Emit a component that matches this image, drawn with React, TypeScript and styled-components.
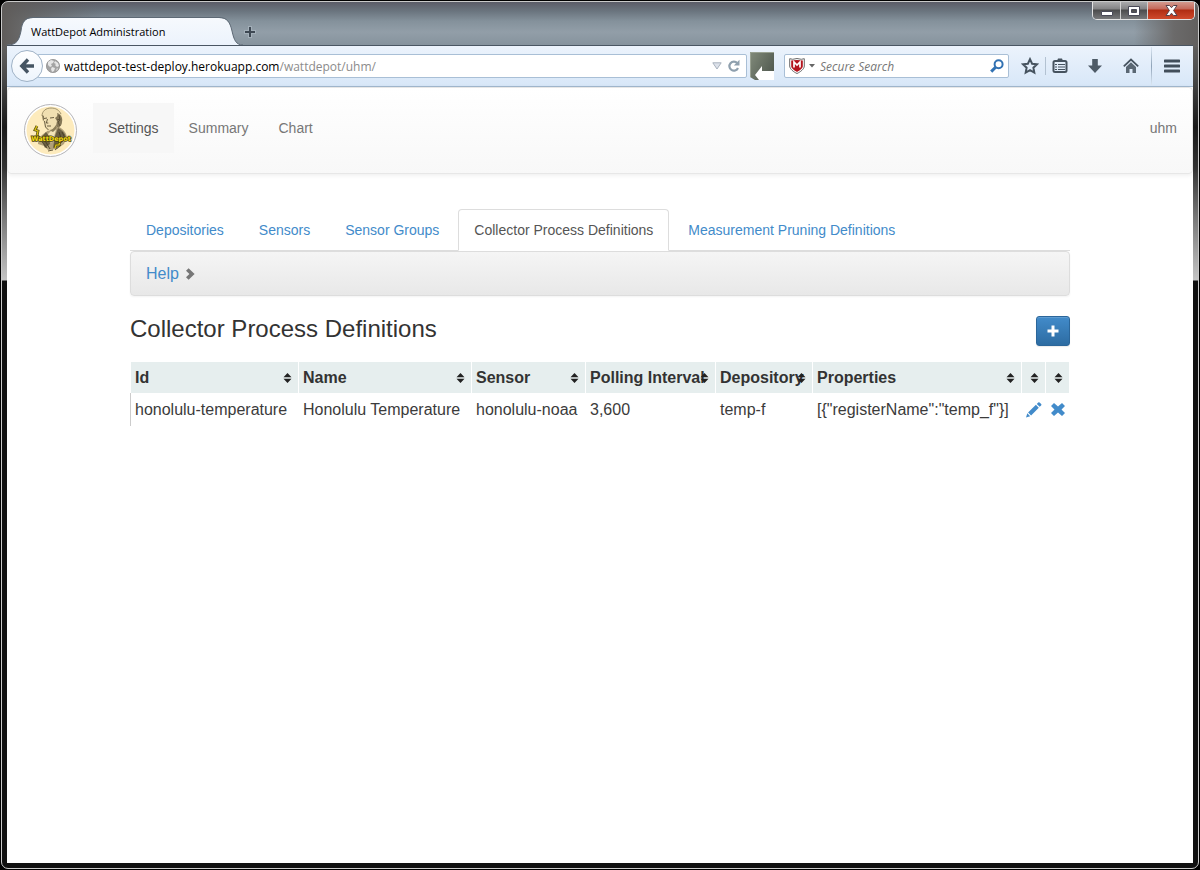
import React from "react";
import styled, { createGlobalStyle, css } from "styled-components";

const GlobalStyle = createGlobalStyle`
  *, *::before, *::after { box-sizing: border-box; }
  body {
    margin: 0;
    background: #000;
    color: #333;
    font: 14px/20px "Liberation Sans", Arial, sans-serif;
  }
  a { text-decoration: none; }
  button { font: inherit; color: inherit; margin: 0; padding: 0; border: 0; background: none; cursor: pointer; }
`;

/* ---------- window frame ---------- */

const Desktop = styled.div`
  display: flex;
  min-height: 100vh;
  padding: 1px;
  background: #000;
`;

const WindowFrame = styled.div`
  display: flex;
  flex: 1;
  flex-direction: column;
  min-width: 0;
  padding: 0 5px 5px;
  border: 1px solid #c9c9c9;
  border-radius: 7px;
  background:
    linear-gradient(90deg, #5f5c5a 0, rgba(95, 92, 90, 0.7) 30px, rgba(95, 92, 90, 0) 100px) 0 0 / 100% 45px no-repeat,
    linear-gradient(270deg, #62605f 0, #6b6a6a 24px, rgba(107, 106, 106, 0) 64px) 0 0 / 100% 45px no-repeat,
    linear-gradient(#5b5c67 0, #6a747e 9px, #84919b 19px, #929ea8 30px, #86939d 43px) 0 0 / 100% 45px no-repeat,
    linear-gradient(#5f5e5d 0, #4a4a4a 30px, #1a1a1a 80px, #333 120px, #777 170px, #c4c4c4 233px, #101010 234px, #101010 100%) 0 45px / 100% 100% no-repeat;
`;

const TitleBar = styled.header`
  display: flex;
  align-items: flex-end;
  height: 43px;
`;

const BrowserTab = styled.div`
  position: relative;
  width: 236px;
  height: 28px;
  padding: 5px 24px 0;
  color: #000;
  font: 11px/20px "Open Sans", sans-serif;
`;

const TabShape = styled.svg`
  position: absolute;
  inset: 0;
  z-index: 0;
`;

const TabTitle = styled.span`
  position: relative;
  white-space: nowrap;
`;

const NewTab = styled.button`
  display: flex;
  padding: 8px 0 7px 1px;
`;

const WindowControls = styled.div`
  display: flex;
  align-self: flex-start;
  margin-left: auto;
  margin-right: -2px;
  border: 1px solid #e3e3e3;
  border-top: 0;
  border-radius: 0 0 5px 5px;
  overflow: hidden;
`;

const ControlButton = styled.button<{ $wide?: boolean; $danger?: boolean }>`
  display: flex;
  align-items: center;
  justify-content: center;
  width: ${(p) => (p.$wide ? 47 : 27)}px;
  height: 17px;
  background: ${(p) =>
    p.$danger
      ? "linear-gradient(#d39a8e 0, #c4685a 7px, #b02c12 8px, #cf4a2c 17px)"
      : "linear-gradient(#a9a9ab 0, #838385 7px, #4b4b4c 8px, #77787a 17px)"};
  & + & { border-left: 1px solid #d0d0d0; }
`;

/* ---------- browser toolbar ---------- */

const Toolbar = styled.div`
  display: flex;
  align-items: center;
  height: 42px;
  padding: 0 13px 1px 4px;
  border-top: 1px solid #4a5663;
  border-bottom: 1px solid #a3b9d0;
  background: linear-gradient(#ecf3fc, #d8e7f8);
`;

const BackButton = styled.button`
  position: relative;
  display: flex;
  align-items: center;
  justify-content: center;
  flex: none;
  width: 32px;
  height: 32px;
  border: 1px solid #9fb2c6;
  border-radius: 50%;
  background: linear-gradient(#fff, #edf4fc);
`;

const fieldBox = css`
  display: flex;
  align-items: center;
  height: 24px;
  border: 1px solid #a9bfd6;
  border-radius: 2px;
  background: #fff;
`;

const AddressBar = styled.div`
  ${fieldBox}
  flex: 1;
  gap: 4px;
  min-width: 0;
  margin-left: -6px;
  padding: 0 4px 0 8px;
`;

const Address = styled.div`
  flex: 1;
  padding-top: 2px;
  overflow: hidden;
  color: #8b8b8b;
  font: 12px/20px "Open Sans", sans-serif;
  white-space: nowrap;
  b { color: #000; font-weight: 400; }
`;

const AddOnButton = styled.button`
  display: flex;
  margin: 0 10px 0 3px;
`;

const SearchBox = styled.form`
  ${fieldBox}
  flex: none;
  width: 225px;
  padding: 0 4px;
`;

const SearchInput = styled.input`
  flex: 1;
  min-width: 0;
  margin-left: 1px;
  padding: 2px 0 0;
  border: 0;
  outline: 0;
  background: none;
  font: italic 12px/20px "Open Sans", sans-serif;
  &::placeholder { color: #777; opacity: 1; }
`;

const ToolButtons = styled.div`
  display: flex;
  align-items: center;
  flex: none;
  margin-left: 12px;
`;

const ToolButton = styled.button<{ $gap: number }>`
  display: flex;
  margin-right: ${(p) => p.$gap}px;
`;

const ToolDivider = styled.span<{ $tall?: boolean; $gap: number }>`
  width: 1px;
  height: ${(p) => (p.$tall ? 38 : 18)}px;
  margin-right: ${(p) => p.$gap}px;
  background: ${(p) => (p.$tall ? "linear-gradient(#dbe6f2, #8fa3b8, #dbe6f2)" : "#b3c2d2")};
`;

/* ---------- page ---------- */

const Page = styled.div`
  flex: 1;
  background: #fff;
`;

const Navbar = styled.nav`
  display: flex;
  align-items: flex-start;
  height: 87px;
  padding: 15px 0 0 16px;
  border: 1px solid #e7e7e7;
  border-radius: 4px;
  background: linear-gradient(#fff, #f8f8f8);
  box-shadow: 0 1px 5px rgba(0, 0, 0, 0.08);
`;

const Brand = styled.a`
  display: flex;
  padding-top: 1px;
  margin-right: 16px;
`;

const NavLink = styled.a<{ $active?: boolean }>`
  padding: 15px;
  color: ${(p) => (p.$active ? "#555" : "#777")};
  background: ${(p) => (p.$active ? "#f7f7f7" : "none")};
`;

const UserLink = styled(NavLink)`
  margin-left: auto;
`;

const Container = styled.main`
  max-width: 970px;
  margin: 0 auto;
  padding: 35px 15px;
`;

const Tabs = styled.div`
  display: flex;
  gap: 3px;
  border-bottom: 1px solid #ddd;
`;

const TabLink = styled.a<{ $active?: boolean }>`
  margin-bottom: -1px;
  padding: 10px 15px;
  border: 1px solid transparent;
  border-radius: 4px 4px 0 0;
  color: #428bca;
  white-space: nowrap;
  ${(p) =>
    p.$active &&
    css`
      color: #555;
      background: #fff;
      border-color: #ddd #ddd #fff;
    `}
`;

const HelpPanel = styled.div`
  height: 45px;
  padding: 10px 15px;
  border: 1px solid #ddd;
  border-radius: 4px;
  background: linear-gradient(#f5f5f5, #e8e8e8);
  box-shadow: 0 1px 2px rgba(0, 0, 0, 0.05);
`;

const HelpLink = styled.a`
  display: inline-flex;
  align-items: center;
  gap: 6px;
  color: #428bca;
  font-size: 16px;
  line-height: 24px;
`;

const HeadingRow = styled.div`
  display: flex;
  align-items: center;
  justify-content: space-between;
  margin: 20px 0 16px;
`;

const Heading = styled.h1`
  margin: 0;
  padding-bottom: 4px;
  font-size: 24px;
  font-weight: 400;
  line-height: 26px;
`;

const AddButton = styled.button`
  display: flex;
  align-items: center;
  justify-content: center;
  width: 34px;
  height: 30px;
  border: 1px solid #2b669a;
  border-radius: 3px;
  background: linear-gradient(#428bca, #2d6ca2);
  box-shadow: inset 0 1px 0 rgba(255, 255, 255, 0.15), 0 1px 1px rgba(0, 0, 0, 0.08);
`;

const DataTable = styled.table`
  width: 100%;
  table-layout: fixed;
  border-spacing: 0;
  font-size: 16px;
`;

const Col = styled.col<{ $width?: number }>`
  width: ${(p) => (p.$width ? `${p.$width}px` : "auto")};
`;

const HeaderCell = styled.th`
  position: relative;
  height: 31px;
  padding: 0;
  border-left: 1px solid #fff;
  background: #e6eeee;
  &:last-child { border-right: 1px solid #fff; }
`;

const SortButton = styled.button`
  display: block;
  width: 100%;
  height: 31px;
  padding: 4px;
  font-weight: 700;
  line-height: 23px;
  text-align: left;
  white-space: nowrap;
`;

const SortArrows = styled.svg`
  position: absolute;
  top: 11px;
  right: 6px;
`;

const Cell = styled.td`
  padding: 5px 4px 4px;
  line-height: 24px;
  white-space: nowrap;
  color: #3b3b3b;
  &:first-child {
    border-left: 1px solid #ccc;
  }
  & + & { border-left: 1px solid transparent; }
`;

const RowAction = styled.button`
  display: flex;
`;

/* ---------- drawings ---------- */

const Logo = () => (
  <svg width="53" height="53" viewBox="0 0 53 53" role="img" aria-label="WattDepot">
    <circle cx="26.5" cy="26.5" r="26" fill="#fff" stroke="#b4b4b8" />
    <circle cx="26.5" cy="26.5" r="24" fill="#fdebbd" />
    <path d="M14 40c0-5 3-9 8-12l5-4 8-1c4 2 7 5 8 10l-3 7-7 5-9 1-4-4z" fill="#b09f78" />
    <path d="M22 28l-5 6 4 10 5-4-1-8zM34 24l-3 8-2 12 6-3 7-8c-1-4-4-7-8-9z" fill="#6b5f43" />
    <path d="M27 27l-3 3 2 4 1 5 3-6 2-7z" fill="#f3e4b8" />
    <path d="M18 12c0-5 4-8 9-8 6 0 10 3 11 8 1 5 0 9-4 11l-3 3-6 1c-3-1-5-4-5-8-2-2-2-5-2-7z" fill="#f0dfb1" />
    <path d="M18 12c0-5 4-8 9-8 5 0 8 2 10 6" fill="none" stroke="#8d7f5a" strokeWidth=".8" />
    <path d="M33 9c4 1 6 5 5 9 0 3-2 5-4 6l-2-2 1-5-2-3c2-1 3-3 2-5zM18 11l2 1 0 4-1 1z" fill="#857756" />
    <path d="M35 11l1 5-2 2 2 4M33 16l3-1" fill="none" stroke="#4f452e" strokeWidth=".8" />
    <path d="M20 14.500l3-.5M26 14l4-.5M23.500 15l-1.200 4h2M23 22h4M20.500 17l1 6 3 3" fill="none" stroke="#5a4f36" strokeWidth=".9" />
    <path d="M25 26c3 0 5-2 7-5l1 3-4 4z" fill="#8b7d58" />
    <path d="M18 38l5 6M20 35l6 10M32 42l7-5M31 46l6-5M24 47l5-1M38 28l3 6M35 28l2 6" stroke="#41371f" strokeWidth=".8" />
    <path d="M13 22l-2 4 3 1-1 5 3 2" fill="none" stroke="#5e5310" strokeWidth="2.800" />
    <path d="M13 22l-2 4 3 1-1 5 3 2" fill="none" stroke="#dcc414" strokeWidth="1.200" />
    <path d="M36 37l-1 4h-3l-1 3" fill="none" stroke="#5e5310" strokeWidth="2.800" />
    <path d="M36 37l-1 4h-3l-1 3" fill="none" stroke="#dcc414" strokeWidth="1.200" />
    <text x="27" y="37" textAnchor="middle" fontFamily="DejaVu Sans, sans-serif" fontWeight="700" fontSize="6.500" fill="#f5dc13" stroke="#4c430b" strokeWidth="1.400" paintOrder="stroke">
      WattDepot
    </text>
  </svg>
);

const PencilIcon = () => (
  <svg width="16" height="16" viewBox="0 0 16 16" fill="#428bca">
    <path d="M0 15.500l1.300-4.200 2.900 2.900zM2.100 10.400l7.800-7.600 2.900 2.900-7.700 7.700zM10.800 1.900L12.200.5q.7-.7 1.400 0l1.500 1.500q.7.700 0 1.400l-1.400 1.400z" />
  </svg>
);

const RemoveIcon = () => (
  <svg width="16" height="16" viewBox="0 0 16 16" fill="#428bca">
    <path d="M4 1L8 4.500 12 1l3 3-3.500 3.500L15 11l-3 3-4-3.500L4 14l-3-3 3.500-3.500L1 4z" />
  </svg>
);

const columns: { label: string; width?: number }[] = [
  { label: "Id", width: 168 },
  { label: "Name", width: 173 },
  { label: "Sensor", width: 114 },
  { label: "Polling Interval", width: 130 },
  { label: "Depository", width: 97 },
  { label: "Properties" },
  { label: "", width: 24 },
  { label: "", width: 25 },
];

const definitions = [
  ["honolulu-temperature", "Honolulu Temperature", "honolulu-noaa", "3,600", "temp-f", '[{"registerName":"temp_f"}]'],
];

const tabs = ["Depositories", "Sensors", "Sensor Groups", "Collector Process Definitions", "Measurement Pruning Definitions"];

const BrowserChrome = () => (
  <>
    <TitleBar>
      <BrowserTab>
        <TabShape width="236" height="28" viewBox="0 0 236 28">
          <defs>
            <linearGradient id="tabFill" x2="0" y2="1">
              <stop offset="0" stopColor="#f6f9fd" />
              <stop offset="1" stopColor="#ecf3fc" />
            </linearGradient>
          </defs>
          <path
            d="M0 28C10 28 12 23 14 14C15 5 18 1 26 1H212C220 1 223 5 225 14C227 23 229 28 236 28z"
            fill="url(#tabFill)"
          />
          <path
            d="M0 28C10 28 12 23 14 14C15 5 18 .5 26 .5H212C220 .5 223 5 225 14C227 23 229 28 236 28"
            fill="none"
            stroke="#5d6975"
          />
        </TabShape>
        <TabTitle>WattDepot Administration</TabTitle>
      </BrowserTab>
      <NewTab aria-label="New tab">
        <svg width="12" height="12" viewBox="0 0 12 12">
          <path d="M6 0v12M0 6h12" stroke="#a3afb9" strokeWidth="4" />
          <path d="M6 1v10M1 6h10" stroke="#3e4853" strokeWidth="2" />
        </svg>
      </NewTab>
      <WindowControls>
        <ControlButton aria-label="Minimize">
          <svg width="12" height="13" viewBox="0 0 12 13">
            <path d="M.5 7.500h11v4H.5z" fill="#fff" stroke="#4a4a58" />
          </svg>
        </ControlButton>
        <ControlButton aria-label="Maximize">
          <svg width="12" height="10" viewBox="0 0 12 10">
            <path d="M.5.5h11v9H.5zM3.500 3.500h5v3h-5z" fill="#fff" fillRule="evenodd" stroke="#4a4a58" />
          </svg>
        </ControlButton>
        <ControlButton $wide $danger aria-label="Close">
          <svg width="13" height="11" viewBox="0 0 13 11">
            <path d="M1 .5h3.500l2 2.200 2-2.200H12L8.600 5.500 12 10.500H8.500l-2-2.300-2 2.300H1l3.400-5z" fill="#fff" stroke="#54424c" />
          </svg>
        </ControlButton>
      </WindowControls>
    </TitleBar>
    <Toolbar>
      <BackButton aria-label="Back">
        <svg width="16" height="16" viewBox="0 0 16 16" fill="none" stroke="#465563" strokeWidth="3.400">
          <path d="M9 1.500L2.800 8 9 14.500M3 8h12" />
        </svg>
      </BackButton>
      <AddressBar>
        <svg width="14" height="14" viewBox="0 0 14 14">
          <circle cx="7" cy="7" r="6.600" fill="#a4a4a4" stroke="#8f8f8f" strokeWidth=".8" />
          <path d="M2 3l3-2 3 1-1 2-2 1 1 2-2 1-2-2zM9 2l3 2 1 3-2 1-2-2 1-1-2-1zM6 8l3 1-1 3-2 1-1-3zM11 9l1 1-2 2z" fill="#e6e6e6" />
        </svg>
        <Address>
          <b>wattdepot-test-deploy.herokuapp.com</b>/wattdepot/uhm/
        </Address>
        <svg width="10" height="8" viewBox="0 0 10 8">
          <path d="M.8.8h8.400L5 7z" fill="#dde2ea" stroke="#a9b2be" />
        </svg>
        <ToolButton $gap={0} aria-label="Reload">
          <svg width="16" height="14" viewBox="0 0 16 14">
            <path d="M11.300 4.200A4.500 4.500 0 1 0 12 9" fill="none" stroke="#8fa0ae" strokeWidth="2.200" />
            <path d="M13.500.8v5.700H7.800z" fill="#8fa0ae" />
          </svg>
        </ToolButton>
      </AddressBar>
      <AddOnButton aria-label="Add-on">
        <svg width="24" height="28" viewBox="0 0 24 28">
          <defs>
            <linearGradient id="addOnFill" x2="1" y2=".6">
              <stop offset="0" stopColor="#828b7b" />
              <stop offset="1" stopColor="#525b51" />
            </linearGradient>
          </defs>
          <path d="M0 0h24v28H5L0 25z" fill="url(#addOnFill)" />
          <path d="M24 19H12v-5L5 23l4 5h15z" fill="#fff" />
          <path d="M.5 25V.5H24" fill="none" stroke="#98a091" />
        </svg>
      </AddOnButton>
      <SearchBox onSubmit={(e) => e.preventDefault()}>
        <svg width="16" height="16" viewBox="0 0 16 16">
          <path d="M.7.7l3 .6L8 .5l4.300.8 3-.6V8c0 3-4 6-7.300 7.500C4.700 14 .7 11 .7 8z" fill="#fff" stroke="#6a6a6a" />
          <path d="M2.200 2.600L8 2l5.800.6V8c0 2.500-3 4.500-5.800 5.900C5.200 12.500 2.200 10.500 2.200 8z" fill="#b3141e" />
          <path d="M5 9.500V4L8 7l3-3v5.500" fill="none" stroke="#fff" strokeWidth="1.700" />
        </svg>
        <svg width="14" height="4" viewBox="0 0 14 4">
          <path d="M4 0h6L7 3.500z" fill="#666" />
        </svg>
        <SearchInput type="text" placeholder="Secure Search" aria-label="Secure Search" />
        <ToolButton $gap={0} aria-label="Search">
          <svg width="14" height="14" viewBox="0 0 14 14" fill="none" stroke="#3272b3">
            <circle cx="8.600" cy="5.200" r="4" strokeWidth="2" />
            <path d="M5.600 8.200L1.200 12.600" strokeWidth="3" />
          </svg>
        </ToolButton>
      </SearchBox>
      <ToolButtons>
        <ToolButton $gap={6} aria-label="Bookmark this page">
          <svg width="18" height="18" viewBox="0 0 18 18">
            <path d="M9 2.200l2.100 4.500 4.900.6-3.600 3.400.9 4.900L9 13.200l-4.300 2.400.9-4.900L2 7.300l4.900-.6z" fill="none" stroke="#46535f" strokeWidth="2" />
          </svg>
        </ToolButton>
        <ToolDivider $gap={6} />
        <ToolButton $gap={20} aria-label="Bookmarks">
          <svg width="16" height="16" viewBox="0 0 16 16">
            <path d="M3 3h10q1.500 0 1.500 1.500v8.500q0 1-1.500 1H3q-1.500 0-1.500-1V4.500Q1.500 3 3 3z" fill="none" stroke="#46535f" strokeWidth="2" />
            <path d="M5 3l1-2.500h4L11 3v1H5z" fill="#46535f" />
            <path d="M3 6.500h2M6 6.500h7M3 9h2M6 9h7M3 11.500h2M6 11.500h7" stroke="#46535f" strokeWidth="1.200" />
          </svg>
        </ToolButton>
        <ToolButton $gap={21} aria-label="Downloads">
          <svg width="14" height="16" viewBox="0 0 14 16">
            <path d="M4.200 1h5.600v6.500H14L7 15 0 7.500h4.200z" fill="#4e5b67" />
          </svg>
        </ToolButton>
        <ToolButton $gap={12} aria-label="Home">
          <svg width="16" height="16" viewBox="0 0 16 16">
            <path d="M.8 8.300L8 1.500l7.200 6.800" fill="none" stroke="#46535f" strokeWidth="1.800" />
            <path d="M3 9l5-4.800L13 9v6H9.500v-4h-3v4H3z" fill="#5a6773" />
          </svg>
        </ToolButton>
        <ToolDivider $tall $gap={12} />
        <ToolButton $gap={0} aria-label="Menu">
          <svg width="16" height="14" viewBox="0 0 16 14">
            <path d="M1 2h14M1 7h14M1 12h14" stroke="#424e5a" strokeWidth="3" strokeLinecap="round" />
          </svg>
        </ToolButton>
      </ToolButtons>
    </Toolbar>
  </>
);

export default function App() {
  return (
    <>
      <GlobalStyle />
      <Desktop>
        <WindowFrame>
          <BrowserChrome />
          <Page>
            <Navbar>
              <Brand href="#">
                <Logo />
              </Brand>
              <NavLink href="#settings" $active>
                Settings
              </NavLink>
              <NavLink href="#summary">Summary</NavLink>
              <NavLink href="#chart">Chart</NavLink>
              <UserLink href="#user">uhm</UserLink>
            </Navbar>
            <Container>
              <Tabs>
                {tabs.map((tab, i) => (
                  <TabLink key={tab} href="#tab" $active={i === 3}>
                    {tab}
                  </TabLink>
                ))}
              </Tabs>
              <HelpPanel>
                <HelpLink href="#help">
                  Help
                  <svg width="11" height="12" viewBox="0 0 11 12">
                    <path d="M1 2.800L3.600.2 9.600 6l-6 5.800L1 9.200 4.400 6z" fill="#777" />
                  </svg>
                </HelpLink>
              </HelpPanel>
              <HeadingRow>
                <Heading>Collector Process Definitions</Heading>
                <AddButton aria-label="Add definition">
                  <svg width="12" height="12" viewBox="0 0 12 12">
                    <path d="M6 .5v11M.5 6h11" stroke="#fff" strokeWidth="3" />
                  </svg>
                </AddButton>
              </HeadingRow>
              <DataTable>
                <colgroup>
                  {columns.map((c, i) => (
                    <Col key={i} $width={c.width} />
                  ))}
                </colgroup>
                <thead>
                  <tr>
                    {columns.map((c, i) => (
                      <HeaderCell key={i} scope="col">
                        <SortButton aria-label={c.label ? undefined : "Sort"}>
                          {c.label}
                          <SortArrows width="9" height="10" viewBox="0 0 9 10" fill="#222">
                            <path d="M4.500 0L8.500 4.200H.5zM.5 5.800h8l-4 4.200z" />
                          </SortArrows>
                        </SortButton>
                      </HeaderCell>
                    ))}
                  </tr>
                </thead>
                <tbody>
                  {definitions.map((row) => (
                    <tr key={row[0]}>
                      {row.map((value) => (
                        <Cell key={value}>{value}</Cell>
                      ))}
                      <Cell>
                        <RowAction aria-label="Edit">
                          <PencilIcon />
                        </RowAction>
                      </Cell>
                      <Cell>
                        <RowAction aria-label="Delete">
                          <RemoveIcon />
                        </RowAction>
                      </Cell>
                    </tr>
                  ))}
                </tbody>
              </DataTable>
            </Container>
          </Page>
        </WindowFrame>
      </Desktop>
    </>
  );
}
